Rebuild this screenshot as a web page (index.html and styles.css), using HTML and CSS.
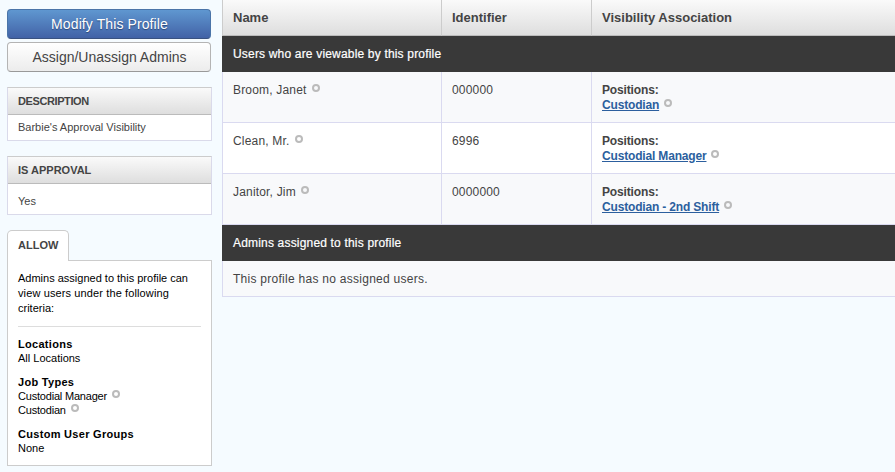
FILE: index.html
```html
<!DOCTYPE html>
<html lang="en">
<head>
    <meta charset="UTF-8">
    <meta name="viewport" content="width=device-width, initial-scale=1.0">
    <title>Profile</title>
    <link rel="stylesheet" href="styles.css">
</head>
<body>
    <div class="page">
        <aside class="sidebar">
            <button class="btn btn_primary">Modify This Profile</button>
            <button class="btn">Assign/Unassign Admins</button>

            <div class="panel panel_description">
                <h3>Description</h3>
                <p class="panel_text">Barbie's Approval Visibility</p>
            </div>
            <div class="panel panel_approval">
                <h3>Is Approval</h3>
                <p class="panel_text">Yes</p>
            </div>

            <div class="tab">Allow</div>
            <div class="tab_content">
                <p class="intro">Admins assigned to this profile can<br><span class="wide">view users under the following</span><br>criteria:</p>
                <dl>
                    <dt>Locations</dt>
                    <dd>All Locations</dd>
                    <dt>Job Types</dt>
                    <dd class="job">Custodial Manager<i class="ring"></i></dd>
                    <dd class="job">Custodian<i class="ring"></i></dd>
                    <dt>Custom User Groups</dt>
                    <dd>None</dd>
                </dl>
            </div>
        </aside>
        <main>
            <table>
                <thead>
                    <tr>
                        <th class="col_name">Name</th>
                        <th class="col_id">Identifier</th>
                        <th>Visibility Association</th>
                    </tr>
                </thead>
                <tbody>
                    <tr class="section">
                        <td colspan="3">Users who are viewable by this profile</td>
                    </tr>
                    <tr class="user odd">
                        <td>Broom, Janet<i class="ring"></i></td>
                        <td>000000</td>
                        <td><b>Positions:</b><br><a href="#">Custodian</a><i class="ring"></i></td>
                    </tr>
                    <tr class="user">
                        <td>Clean, Mr.<i class="ring"></i></td>
                        <td>6996</td>
                        <td><b>Positions:</b><br><a href="#">Custodial Manager</a><i class="ring"></i></td>
                    </tr>
                    <tr class="user odd">
                        <td>Janitor, Jim<i class="ring"></i></td>
                        <td>0000000</td>
                        <td><b>Positions:</b><br><a href="#">Custodian - 2nd Shift</a><i class="ring"></i></td>
                    </tr>
                    <tr class="section">
                        <td colspan="3">Admins assigned to this profile</td>
                    </tr>
                    <tr class="empty odd">
                        <td colspan="3">This profile has no assigned users.</td>
                    </tr>
                </tbody>
            </table>
        </main>
    </div>
</body>
</html>
```

FILE: styles.css
```css
* {
    box-sizing: border-box;
}
body {
    margin: 0;
    height: 472px;
    overflow: hidden;
    background-color: #f5fbff;
    color: #444;
    font-family: "Liberation Sans", Arial, sans-serif;
    font-size: 12px;
}
h3, p, dl, dd {
    margin: 0;
}
.page {
    display: flex;
    gap: 10px;
    padding-left: 7px;
}

/* sidebar */
.sidebar {
    width: 205px;
    flex-shrink: 0;
    padding-top: 9px;
}
.btn {
    display: block;
    width: 204px;
    height: 30px;
    margin-bottom: 3px;
    padding: 0 0 0 1px;
    border: 1px solid #b4b4b4;
    border-bottom-color: #999;
    border-radius: 4px;
    background: linear-gradient(#fff, #ececec);
    color: #444;
    font-family: inherit;
    font-size: 14px;
}
.btn_primary {
    border-color: #4a74a8;
    border-bottom-color: #3a5280;
    background: linear-gradient(#5f97d0, #4262a6);
    color: #fff;
    letter-spacing: 0.1px;
    text-shadow: 0 1px 1px #2c4778;
}
.panel {
    height: 54px;
    margin-top: 15px;
    border: 1px solid #dadaea;
    border-top-color: #ccc;
    background-color: #fff;
    font-size: 11px;
}
.panel h3 {
    height: 27px;
    padding-left: 10px;
    border-bottom: 1px solid #bbb;
    background: linear-gradient(#fafafa, #dedede);
    font-size: 11px;
    line-height: 27px;
    text-transform: uppercase;
}
.panel_description h3 {
    letter-spacing: -0.4px;
}
.panel_text {
    padding-left: 10px;
    line-height: 25px;
}
.panel_approval {
    height: 59px;
}
.panel_approval .panel_text {
    line-height: 34px;
}
.tab {
    position: relative;
    z-index: 1;
    width: 62px;
    height: 31px;
    margin-top: 15px;
    padding-left: 10px;
    border: 1px solid #ccc;
    border-bottom: 0;
    border-radius: 5px 5px 0 0;
    background-color: #fff;
    font-size: 11px;
    font-weight: bold;
    line-height: 29px;
    text-transform: uppercase;
}
.tab_content {
    height: 206px;
    margin-top: -1px;
    padding: 10px;
    border: 1px solid #ccc;
    background-color: #fff;
    color: #000;
    font-size: 11px;
    line-height: 14px;
}
.intro {
    padding-bottom: 10px;
    border-bottom: 1px solid #ddd;
    line-height: 15px;
}
.wide {
    letter-spacing: 0.12px;
}
dt {
    margin-top: 10px;
    font-weight: bold;
    letter-spacing: 0.3px;
}
.job {
    letter-spacing: -0.2px;
}

/* small grey circle after a name */
.ring {
    display: inline-block;
    width: 8px;
    height: 8px;
    margin-left: 5px;
    border: 2px solid #bbb;
    border-radius: 50%;
    vertical-align: 2px;
}

/* table */
main {
    flex: 1;
    min-width: 0;
}
table {
    width: 690px;
    border-collapse: separate;
    border-spacing: 0;
    table-layout: fixed;
}
.col_name {
    width: 219px;
}
.col_id {
    width: 150px;
}
th {
    height: 36px;
    padding: 0 10px;
    border-left: 1px solid #ccc;
    border-bottom: 1px solid #bbb;
    background: linear-gradient(#fafafa, #dedede);
    font-size: 13px;
    text-align: left;
}
td {
    padding: 0 10px;
    border-left: 1px solid #dadaf0;
    border-bottom: 1px solid #dadaf0;
    background-color: #fff;
    letter-spacing: 0.18px;
    line-height: 15px;
}
.odd td {
    background-color: #f8f9fb;
}
.user td {
    height: 51px;
    padding-top: 11px;
    vertical-align: top;
}
.section td {
    height: 36px;
    padding-top: 2px;
    border-color: #393939;
    background-color: #393939;
    color: #fff;
    -webkit-text-stroke: 0.2px #fff;
}
.empty td {
    height: 36px;
    padding-top: 2px;
    letter-spacing: 0.27px;
}
td b {
    letter-spacing: -0.15px;
}
a {
    color: #2c5f9e;
    font-weight: bold;
    letter-spacing: -0.17px;
}
```
